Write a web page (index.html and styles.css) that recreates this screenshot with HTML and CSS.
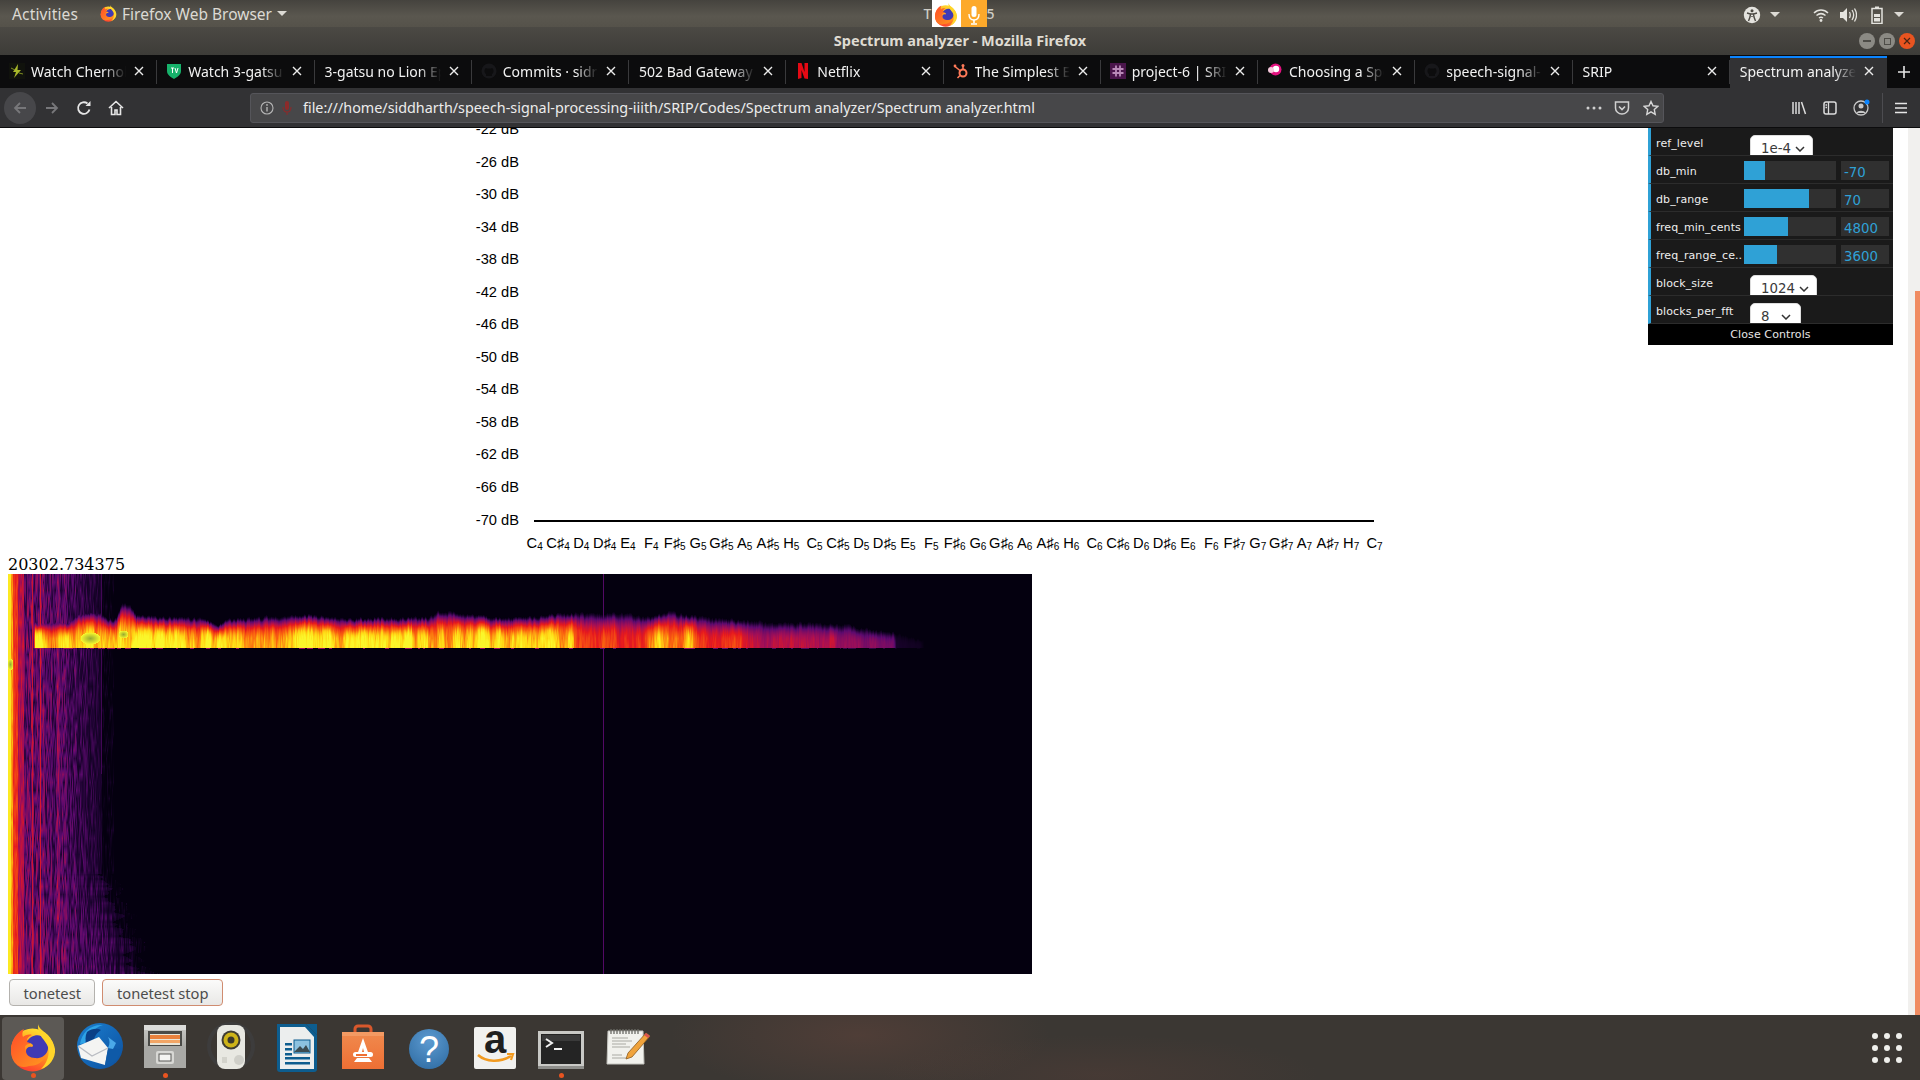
FILE: index.html
```html
<!DOCTYPE html>
<html lang="en">
<head>
<meta charset="utf-8">
<title>Spectrum analyzer - Mozilla Firefox</title>
<link rel="stylesheet" href="styles.css">
</head>
<body>
<svg class="defs" aria-hidden="true">
  <defs>
    <linearGradient id="ffBody" x1="0.75" y1="0.1" x2="0.35" y2="1">
      <stop offset="0" stop-color="#ffdc2e"/><stop offset="0.45" stop-color="#ff9a1f"/><stop offset="1" stop-color="#ff3a30"/>
    </linearGradient>
    <linearGradient id="ffHead" x1="0" y1="0" x2="1" y2="1">
      <stop offset="0" stop-color="#ff4a2a"/><stop offset="1" stop-color="#ff9b1e"/>
    </linearGradient>
    <linearGradient id="tbBlue" x1="0" y1="0" x2="1" y2="1">
      <stop offset="0" stop-color="#1b7fd0"/><stop offset="1" stop-color="#0c4f9e"/>
    </linearGradient>
    <linearGradient id="fileG" x1="0" y1="0" x2="0" y2="1">
      <stop offset="0" stop-color="#c9c9c6"/><stop offset="1" stop-color="#8d8d89"/>
    </linearGradient>
    <linearGradient id="bagG" x1="0" y1="0" x2="0" y2="1">
      <stop offset="0" stop-color="#f08a4e"/><stop offset="1" stop-color="#ee6f34"/>
    </linearGradient>
    <radialGradient id="helpG" cx="0.5" cy="0.3" r="0.8">
      <stop offset="0" stop-color="#5c9ad0"/><stop offset="1" stop-color="#2f6ca3"/>
    </radialGradient>
    <symbol id="firefox" viewBox="0 0 48 48" overflow="visible">
      <circle cx="23.5" cy="26" r="21.5" fill="url(#ffBody)"/>
      <path d="M2 27C2 16 8 8 15 5c-2 3-2 6-1 8 2-2 6-3 9-2-3 1-5 3-5 5 3 1 4 2 3 4-3 0-5 1-5 4 0 4 5 7 10 6 5 0 10-3 12-9 2 10-5 21-18 21C10 46 2 38 2 27Z" fill="url(#ffHead)"/>
      <path d="M18 18c2-5 9-8 14-6 5 2 8 7 7 13-1 6-7 10-13 9-5 0-9-3-9-7 0-3 3-5 6-4 2-1 1-3-2-4-1 0-2-1-3-1Z" fill="#3f3ab4"/>
      <path d="M29 0c1 7 15 11 17 25 1 9-6 18-14 20 6-6 9-14 7-22-2-7-11-11-10-23Z" fill="#ffd52a"/>
    </symbol>
  </defs>
</svg>

<header class="top-panel">
  <div class="panel-left">
    <span class="panel-item activities">Activities</span>
    <svg class="ff-small"><use href="#firefox"/></svg>
    <span class="panel-item">Firefox Web Browser</span>
    <span class="caret"></span>
  </div>
  <div class="panel-clock">
    <span class="clock-text">T</span>
    <span class="share-fox"><svg class="ff-share"><use href="#firefox"/></svg></span>
    <span class="share-mic">
      <svg viewBox="0 0 16 22" width="16" height="22"><rect x="5.5" y="2" width="5" height="11" rx="2.5" fill="#fff"/><path d="M3 10c0 4 2 6 5 6s5-2 5-6" fill="none" stroke="#fff" stroke-width="1.4"/><path d="M8 16v3M5 20h6" stroke="#fff" stroke-width="1.6"/></svg>
    </span>
    <span class="clock-text">5</span>
  </div>
  <div class="panel-right">
    <svg viewBox="0 0 18 18" width="18" height="18"><circle cx="9" cy="9" r="8.2" fill="#e4e3de"/><circle cx="9" cy="4.8" r="1.5" fill="#4c4a44"/><path d="M4 7l3.5 1-.5 3-1.5 4M14 7l-3.5 1 .5 3 1.5 4M7.5 8h3M9 10v1" fill="none" stroke="#4c4a44" stroke-width="1.4"/></svg>
    <span class="caret tight-1"></span>
    <svg class="wifi" viewBox="0 0 16 16" width="16" height="16"><path d="M1 6c4-4 10-4 14 0M3.5 8.5c3-2.5 6-2.5 9 0M6 11c1.500-1 2.500-1 4 0" fill="none" stroke="#e4e3de" stroke-width="1.5"/><circle cx="8" cy="13.500" r="1.400" fill="#e4e3de"/></svg>
    <svg class="vol" viewBox="0 0 18 16" width="18" height="16"><path d="M1 5h3l4-4v14l-4-4H1Z" fill="#e4e3de"/><path d="M10.500 5c1 2 1 4 0 6M13 3c2 3 2 7 0 10M15.500 1.500c2.500 4 2.500 9 0 13" fill="none" stroke="#e4e3de" stroke-width="1.300"/></svg>
    <svg class="batt" viewBox="0 0 12 18" width="12" height="18"><rect x="1" y="2.500" width="10" height="15" fill="none" stroke="#e4e3de" stroke-width="1.500"/><rect x="4" y="0.500" width="4" height="2" fill="#e4e3de"/><rect x="3" y="8" width="6" height="3" fill="#e4e3de"/><rect x="3" y="12" width="6" height="3.500" fill="#e4e3de"/></svg>
    <span class="caret tight-2"></span>
  </div>
</header>

<div class="title-bar">
  <span class="title-text">Spectrum analyzer - Mozilla Firefox</span>
  <div class="win-buttons">
    <span class="win-btn"><i class="win-min"></i></span>
    <span class="win-btn"><i class="win-max"></i></span>
    <span class="win-btn win-close"><svg viewBox="0 0 8 8" width="8" height="8"><path d="M1 1l6 6M7 1L1 7" stroke="#4a2413" stroke-width="1.200"/></svg></span>
  </div>
</div>

<nav class="tab-strip">
  <div class="tab">
    <svg class="fav" viewBox="0 0 16 16"><rect width="16" height="16" fill="#10120c"/><path d="M9 1L4 9h3l-2 6 7-8H8.500Z" fill="#a8b82a"/><path d="M2 5l4 2M14 11l-4-1" stroke="#7f8e20"/></svg>
    <span class="tab-title">Watch Chernobyl</span><svg class="tab-x" viewBox="0 0 10 10"><path d="M1 1l8 8M9 1L1 9"/></svg>
  </div>
  <div class="tab">
    <svg class="fav" viewBox="0 0 16 16"><path d="M1 1h14v7c0 4-4 6-7 8-3-2-7-4-7-8Z" fill="#17b26b"/><path d="M5 5h3M6.500 5v5M9 5l1.500 5L12 5" fill="none" stroke="#fff" stroke-width="1"/></svg>
    <span class="tab-title">Watch 3-gatsu no Lion</span><svg class="tab-x" viewBox="0 0 10 10"><path d="M1 1l8 8M9 1L1 9"/></svg>
  </div>
  <div class="tab tab-noicon">
    <span class="tab-title">3-gatsu no Lion Episode</span><svg class="tab-x" viewBox="0 0 10 10"><path d="M1 1l8 8M9 1L1 9"/></svg>
  </div>
  <div class="tab">
    <svg class="fav" viewBox="0 0 16 16"><circle cx="8" cy="8" r="7.500" fill="#17171a"/><path d="M5 13V11C3 10 3 6 5 5l1 .5h4L11 5c2 1 2 5 0 6v2Z" fill="#0c0c0d"/></svg>
    <span class="tab-title">Commits · sidrah</span><svg class="tab-x" viewBox="0 0 10 10"><path d="M1 1l8 8M9 1L1 9"/></svg>
  </div>
  <div class="tab tab-noicon">
    <span class="tab-title">502 Bad Gateway</span><svg class="tab-x" viewBox="0 0 10 10"><path d="M1 1l8 8M9 1L1 9"/></svg>
  </div>
  <div class="tab">
    <svg class="fav" viewBox="0 0 16 16"><path d="M3 0h3.500l3 9V0H13v16l-3.500-.5-3-8.500v8L3 16Z" fill="#e50914"/></svg>
    <span class="tab-title">Netflix</span><svg class="tab-x" viewBox="0 0 10 10"><path d="M1 1l8 8M9 1L1 9"/></svg>
  </div>
  <div class="tab">
    <svg class="fav" viewBox="0 0 16 16"><circle cx="10" cy="10" r="3.500" fill="none" stroke="#ff7a59" stroke-width="2"/><path d="M10 6V3M7.500 8L2 3.500" stroke="#ff7a59" stroke-width="1.600"/><circle cx="10" cy="2.500" r="1.500" fill="#ff7a59"/><circle cx="2" cy="3" r="1.400" fill="#ff7a59"/><path d="M7 12.500L4.500 15" stroke="#ff7a59" stroke-width="1.600"/></svg>
    <span class="tab-title">The Simplest Explanation</span><svg class="tab-x" viewBox="0 0 10 10"><path d="M1 1l8 8M9 1L1 9"/></svg>
  </div>
  <div class="tab">
    <svg class="fav" viewBox="0 0 16 16"><rect width="16" height="16" fill="#4a154b"/><path d="M6 2.500v11M10 2.500v11M2.500 6h11M2.500 10h11" stroke="#b98ab8" stroke-width="1.800"/></svg>
    <span class="tab-title">project-6 | SRIP Slack</span><svg class="tab-x" viewBox="0 0 10 10"><path d="M1 1l8 8M9 1L1 9"/></svg>
  </div>
  <div class="tab">
    <svg class="fav" viewBox="0 0 16 16"><circle cx="8.500" cy="6.500" r="6" fill="#e2117e"/><circle cx="9" cy="6" r="3.200" fill="#fff"/><circle cx="4" cy="7" r="3" fill="#f6c9dc"/></svg>
    <span class="tab-title">Choosing a Spectrum</span><svg class="tab-x" viewBox="0 0 10 10"><path d="M1 1l8 8M9 1L1 9"/></svg>
  </div>
  <div class="tab">
    <svg class="fav" viewBox="0 0 16 16"><circle cx="8" cy="8" r="7.500" fill="#17171a"/><path d="M5 13V11C3 10 3 6 5 5l1 .5h4L11 5c2 1 2 5 0 6v2Z" fill="#0c0c0d"/></svg>
    <span class="tab-title">speech-signal-processing</span><svg class="tab-x" viewBox="0 0 10 10"><path d="M1 1l8 8M9 1L1 9"/></svg>
  </div>
  <div class="tab tab-noicon">
    <span class="tab-title">SRIP</span><svg class="tab-x" viewBox="0 0 10 10"><path d="M1 1l8 8M9 1L1 9"/></svg>
  </div>
  <div class="tab tab-noicon tab-active">
    <span class="tab-title">Spectrum analyzer</span><svg class="tab-x" viewBox="0 0 10 10"><path d="M1 1l8 8M9 1L1 9"/></svg>
  </div>
  <div class="new-tab"><svg viewBox="0 0 14 14" width="14" height="14"><path d="M7 1v12M1 7h12" stroke="#e6e6e6" stroke-width="1.600"/></svg></div>
</nav>

<div class="nav-bar">
  <span class="back-btn"><svg viewBox="0 0 16 16" width="16" height="16"><path d="M14 8H3M8 3L3 8l5 5" fill="none" stroke="#77777a" stroke-width="1.800"/></svg></span>
  <span class="nav-btn"><svg viewBox="0 0 16 16" width="16" height="16"><path d="M2 8h11M8 3l5 5-5 5" fill="none" stroke="#77777a" stroke-width="1.800"/></svg></span>
  <span class="nav-btn"><svg viewBox="0 0 16 16" width="16" height="16"><path d="M13.500 9.500A5.800 5.800 0 1 1 11.500 3.500" fill="none" stroke="#e6e6e6" stroke-width="1.800"/><path d="M9.500 6h5V1Z" fill="#e6e6e6"/></svg></span>
  <span class="nav-btn"><svg viewBox="0 0 16 16" width="16" height="16"><path d="M1 8l7-6.500L15 8M3.500 7v7.500h3.500V10h2v4.500h3.500V7" fill="none" stroke="#e6e6e6" stroke-width="1.600"/></svg></span>
  <div class="url-bar">
    <svg class="url-info" viewBox="0 0 14 14" width="14" height="14"><circle cx="7" cy="7" r="6" fill="none" stroke="#b5b5b5" stroke-width="1.100"/><path d="M7 6v4.500" stroke="#b5b5b5" stroke-width="1.400"/><circle cx="7" cy="3.900" r=".9" fill="#b5b5b5"/></svg>
    <svg class="url-mic" viewBox="0 0 12 16" width="12" height="16"><rect x="4" y="1" width="4" height="9" rx="2" fill="#8c2a2a"/><path d="M2 7c0 3 1.500 5 4 5s4-2 4-5M6 12v3" fill="none" stroke="#8c2a2a" stroke-width="1.100"/></svg>
    <span class="url-text">file:///home/siddharth/speech-signal-processing-iiith/SRIP/Codes/Spectrum analyzer/Spectrum analyzer.html</span>
    <svg class="url-dots" viewBox="0 0 16 4" width="16" height="4"><circle cx="2" cy="2" r="1.500" fill="#d0d0d0"/><circle cx="8" cy="2" r="1.500" fill="#d0d0d0"/><circle cx="14" cy="2" r="1.500" fill="#d0d0d0"/></svg>
    <svg class="url-pocket" viewBox="0 0 16 16" width="16" height="16"><path d="M1.500 2h13v6c0 3.500-3 6-6.500 6s-6.500-2.500-6.500-6Z" fill="none" stroke="#d0d0d0" stroke-width="1.500"/><path d="M5 6.500l3 3 3-3" fill="none" stroke="#d0d0d0" stroke-width="1.600"/></svg>
    <svg class="url-star" viewBox="0 0 16 16" width="16" height="16"><path d="M8 1.500l2 4.300 4.700.6-3.400 3.200.9 4.700L8 11.900l-4.200 2.400.9-4.700L1.300 6.400 6 5.800Z" fill="none" stroke="#d8d8d8" stroke-width="1.400"/></svg>
  </div>
  <div class="nav-tools">
    <svg viewBox="0 0 16 16" width="16" height="16"><path d="M2 2v12M5 2v12M8 2v12M10.500 2l4 12" fill="none" stroke="#dcdcdc" stroke-width="1.500"/></svg>
    <svg viewBox="0 0 16 16" width="16" height="16"><rect x="2" y="2" width="12" height="12" rx="2" fill="none" stroke="#dcdcdc" stroke-width="1.500"/><path d="M6.500 2v12M3.500 5h1.500M3.500 7.500h1.500" stroke="#dcdcdc" stroke-width="1.300"/></svg>
    <svg viewBox="0 0 18 18" width="18" height="18"><circle cx="8" cy="9" r="7" fill="none" stroke="#c8c8c8" stroke-width="1.300"/><circle cx="8" cy="7" r="2.500" fill="#c8c8c8"/><path d="M3.500 14c1-3 8-3 9 0" fill="#c8c8c8"/><circle cx="14" cy="3" r="2.500" fill="#0a84ff"/></svg>
    <span class="tool-sep"></span>
    <svg viewBox="0 0 14 14" width="14" height="14"><path d="M1 2.500h12M1 7h12M1 11.500h12" stroke="#e6e6e6" stroke-width="1.600"/></svg>
  </div>
</div>

<div class="viewport">
  <main class="page">
    <div class="chart">
      <div class="y-axis">
        <span>-22 dB</span><span>-26 dB</span><span>-30 dB</span><span>-34 dB</span><span>-38 dB</span><span>-42 dB</span><span>-46 dB</span><span>-50 dB</span><span>-54 dB</span><span>-58 dB</span><span>-62 dB</span><span>-66 dB</span><span>-70 dB</span>
      </div>
      <div class="plot"></div>
    </div>
    <div class="notes">
      <span>C<sub>4</sub></span><span>C♯<sub>4</sub></span><span>D<sub>4</sub></span><span>D♯<sub>4</sub></span><span>E<sub>4</sub></span><span>F<sub>4</sub></span><span>F♯<sub>5</sub></span><span>G<sub>5</sub></span><span>G♯<sub>5</sub></span><span>A<sub>5</sub></span><span>A♯<sub>5</sub></span><span>H<sub>5</sub></span>
      <span>C<sub>5</sub></span><span>C♯<sub>5</sub></span><span>D<sub>5</sub></span><span>D♯<sub>5</sub></span><span>E<sub>5</sub></span><span>F<sub>5</sub></span><span>F♯<sub>6</sub></span><span>G<sub>6</sub></span><span>G♯<sub>6</sub></span><span>A<sub>6</sub></span><span>A♯<sub>6</sub></span><span>H<sub>6</sub></span>
      <span>C<sub>6</sub></span><span>C♯<sub>6</sub></span><span>D<sub>6</sub></span><span>D♯<sub>6</sub></span><span>E<sub>6</sub></span><span>F<sub>6</sub></span><span>F♯<sub>7</sub></span><span>G<sub>7</sub></span><span>G♯<sub>7</sub></span><span>A<sub>7</sub></span><span>A♯<sub>7</sub></span><span>H<sub>7</sub></span><span>C<sub>7</sub></span>
    </div>
    <div class="freq">20302.734375</div>
    <canvas id="spectrogram" class="spectrogram" width="1024" height="400"></canvas>
    <div class="buttons">
      <button class="btn">tonetest</button>
      <button class="btn btn-focus">tonetest stop</button>
    </div>

    <aside class="gui">
      <div class="gui-row"><span class="gui-label">ref_level</span><span class="gui-select sel-ref">1e-4<svg viewBox="0 0 10 6" width="10" height="6"><path d="M1 1l4 4 4-4" fill="none" stroke="#333" stroke-width="1.500"/></svg></span></div>
      <div class="gui-row"><span class="gui-label">db_min</span><span class="slider"><i class="fill fill-21"></i></span><span class="num">-70</span></div>
      <div class="gui-row"><span class="gui-label">db_range</span><span class="slider"><i class="fill fill-65"></i></span><span class="num">70</span></div>
      <div class="gui-row"><span class="gui-label">freq_min_cents</span><span class="slider"><i class="fill fill-44"></i></span><span class="num">4800</span></div>
      <div class="gui-row"><span class="gui-label">freq_range_ce..</span><span class="slider"><i class="fill fill-33"></i></span><span class="num">3600</span></div>
      <div class="gui-row"><span class="gui-label">block_size</span><span class="gui-select sel-block">1024<svg viewBox="0 0 10 6" width="10" height="6"><path d="M1 1l4 4 4-4" fill="none" stroke="#333" stroke-width="1.500"/></svg></span></div>
      <div class="gui-row"><span class="gui-label">blocks_per_fft</span><span class="gui-select sel-fft">8<svg viewBox="0 0 10 6" width="10" height="6"><path d="M1 1l4 4 4-4" fill="none" stroke="#333" stroke-width="1.500"/></svg></span></div>
      <div class="gui-close">Close Controls</div>
    </aside>
  </main>
  <div class="scrollbar"><span class="thumb"></span></div>
</div>

<footer class="dock">
  <div class="dock-item dock-active">
    <svg class="dock-icon"><use href="#firefox"/></svg><i class="dot"></i>
  </div>
  <div class="dock-item">
    <svg class="dock-icon" viewBox="0 0 48 48">
      <circle cx="25" cy="22" r="23" fill="url(#tbBlue)"/>
      <path d="M5 20C7 8 16 0 28 1c-7 2-9 5-10 9-4 1-7 4-8 9Z" fill="#2fa3e6"/>
      <path d="M12 8c5-4 11-4 14-2-3 2-6 5-7 9-3 1-6 3-7 6-2-4-2-9 0-13Z" fill="#0b3f86"/>
      <path d="M3 22L24 13l9 11-3 17-24-7Z" fill="#f4f4f2"/>
      <path d="M3 22l14 10 16-8" fill="none" stroke="#b9bcc2" stroke-width="1.300"/>
      <path d="M30 41c7 0 15-6 17-17-3 2-5 1-7 0l-7 1Z" fill="#0f5aa8"/>
      <path d="M33 24c2-4 2-8 0-11l8 6-3 6Z" fill="#4aa9e8"/>
    </svg>
  </div>
  <div class="dock-item">
    <svg class="dock-icon" viewBox="0 0 48 48">
      <rect x="3" y="1" width="42" height="43" rx="2" fill="url(#fileG)"/>
      <rect x="3" y="1" width="42" height="5" fill="#dcdcda"/>
      <rect x="7" y="7" width="34" height="15" fill="#4a4a47"/>
      <rect x="9" y="10" width="30" height="11" fill="#e9e4d6"/>
      <rect x="9" y="11" width="30" height="4" fill="#e9813c"/>
      <rect x="9" y="16" width="30" height="3" fill="#f2a565"/>
      <path d="M3 22h42v22H3Z" fill="#a9a9a6"/>
      <rect x="15" y="27" width="18" height="13" rx="2" fill="#d8d8d5"/>
      <rect x="18" y="30" width="12" height="7" fill="#f4f4f2" stroke="#5a5a58"/>
    </svg><i class="dot"></i>
  </div>
  <div class="dock-item">
    <svg class="dock-icon" viewBox="0 0 48 48">
      <circle cx="24" cy="22" r="24" fill="#434a52" opacity=".3"/>
      <circle cx="24" cy="22" r="20" fill="#3b3733"/>
      <rect x="10" y="1" width="28" height="44" rx="8" fill="#e8e8e2"/>
      <circle cx="24" cy="16" r="9.500" fill="#3f3c34"/>
      <circle cx="24" cy="16" r="7.500" fill="#cdb319"/>
      <circle cx="24" cy="16" r="3.500" fill="#3a372c"/>
      <circle cx="32" cy="36" r="5" fill="#cfcfc9"/>
      <rect x="15" y="33" width="5" height="6" fill="#d3d3cc"/>
    </svg>
  </div>
  <div class="dock-item">
    <svg class="dock-icon" viewBox="0 0 48 48">
      <path d="M4 0h29l11 11v34a3 3 0 0 1-3 3H7a3 3 0 0 1-3-3Z" fill="#0d5d8f"/>
      <path d="M7 3h25l9 10v32H7Z" fill="#eceeee"/>
      <path d="M33 0h11v11Z" fill="#0d5d8f"/>
      <rect x="12" y="19" width="7" height="2.500" fill="#0d5d8f"/><rect x="12" y="24" width="7" height="2.500" fill="#0d5d8f"/><rect x="12" y="29" width="7" height="2.500" fill="#0d5d8f"/>
      <rect x="21" y="16" width="16" height="13" fill="#8cc2e0" stroke="#0d5d8f"/>
      <path d="M21 28l6-6 3 3 3-4 4 7Z" fill="#3c4c52"/>
      <rect x="12" y="33" width="25" height="2.500" fill="#0d5d8f"/><rect x="12" y="38" width="25" height="2.500" fill="#0d5d8f"/>
    </svg>
  </div>
  <div class="dock-item">
    <svg class="dock-icon" viewBox="0 0 48 48">
      <path d="M16 8V5a3 3 0 0 1 3-3h10a3 3 0 0 1 3 3v3" fill="none" stroke="#d9582c" stroke-width="3"/>
      <path d="M3 8h42l0 37H3Z" fill="url(#bagG)"/>
      <path d="M3 8h42v4H3Z" fill="#f39a63"/>
      <path d="M18 31l6-17 6 17h-4l-2-7-2 7Z" fill="#fff"/>
      <rect x="14" y="28" width="20" height="5" rx="2.500" fill="#fff"/>
      <rect x="17" y="30" width="11" height="2" fill="#ee6f34"/>
      <path d="M15 38l3-4h12l3 4Z" fill="#fff"/>
    </svg>
  </div>
  <div class="dock-item">
    <svg class="dock-icon" viewBox="0 0 48 48">
      <circle cx="24" cy="25" r="20" fill="url(#helpG)"/>
      <text x="24" y="38" class="help-q">?</text>
    </svg>
  </div>
  <div class="dock-item">
    <svg class="dock-icon" viewBox="0 0 48 48">
      <rect x="3" y="3" width="42" height="42" rx="2" fill="#f1f1ef"/>
      <text x="24" y="29" class="amazon-a">a</text>
      <path d="M7 31c8 7 22 8 33 1" fill="none" stroke="#f29a1f" stroke-width="2.600"/>
      <path d="M36 30l6 0-2 6" fill="none" stroke="#f29a1f" stroke-width="2.200"/>
    </svg>
  </div>
  <div class="dock-item">
    <svg class="dock-icon" viewBox="0 0 48 48">
      <rect x="1" y="7" width="46" height="38" fill="#c9c9c6"/>
      <rect x="1" y="42" width="46" height="3" fill="#8e8e8b"/>
      <rect x="4" y="10" width="40" height="30" fill="#242424"/>
      <rect x="5" y="11" width="38" height="6" fill="#3a3a3a"/>
      <path d="M9 15l6 4-6 4" fill="none" stroke="#f2f2f2" stroke-width="2"/>
      <rect x="17" y="24" width="8" height="2" fill="#f2f2f2"/>
    </svg><i class="dot"></i>
  </div>
  <div class="dock-item">
    <svg class="dock-icon" viewBox="0 0 48 48">
      <path d="M5 7h35l1 33H4Z" fill="#f1f1ed" stroke="#c4c4bf"/>
      <path d="M8 5v5M11 5v5M14 5v5M17 5v5M20 5v5M23 5v5M26 5v5M29 5v5M32 5v5M35 5v5" stroke="#6a6a66" stroke-width="1.300"/>
      <path d="M9 14h16M9 17h20M9 20h14M9 23h18M9 31h10M9 34h14" stroke="#a9a9a4" stroke-width="1.200"/>
      <path d="M43 9l4 3-18 21-6 2 2-6Z" fill="#f0a33c" stroke="#8a5a20" stroke-width=".8"/>
      <path d="M43 9l4 3-2 2-4-3Z" fill="#d9534f"/>
    </svg>
  </div>
  <svg class="app-grid" viewBox="0 0 30 30" width="30" height="30">
    <circle cx="3" cy="3" r="3"/><circle cx="15" cy="3" r="3"/><circle cx="27" cy="3" r="3"/>
    <circle cx="3" cy="15" r="3"/><circle cx="15" cy="15" r="3"/><circle cx="27" cy="15" r="3"/>
    <circle cx="3" cy="27" r="3"/><circle cx="15" cy="27" r="3"/><circle cx="27" cy="27" r="3"/>
  </svg>
</footer>
<script src="script.js"></script>
</body>
</html>
```
FILE: styles.css
```css
* { box-sizing: border-box; }
html, body { margin: 0; height: 100%; overflow: hidden; }
body {
  width: 1920px;
  height: 1080px;
  display: flex;
  flex-direction: column;
  font-family: "Noto Sans", sans-serif;
  background: #fff;
}
.defs { display: block; width: 0; height: 0; overflow: hidden; flex: none; }

/* GNOME top panel */
.top-panel {
  height: 27px;
  flex: none;
  display: grid;
  grid-template-columns: 1fr auto 1fr;
  background: linear-gradient(#45433e, #5a574f 60%, #55524a);
  color: #dcdad4;
  font-size: 15.5px;
}
.panel-left { display: flex; align-items: center; padding: 0 0 2px 12px; }
.panel-item { white-space: nowrap; }
.activities { margin-right: 22px; letter-spacing: .15px; }
.ff-small { width: 17px; height: 17px; margin-right: 5px; flex: none; }
.caret {
  width: 0; height: 0; margin-left: 5px;
  border-left: 5px solid transparent;
  border-right: 5px solid transparent;
  border-top: 5px solid #dcdad4;
}
.panel-clock { display: flex; align-items: flex-start; }
.clock-text { line-height: 27px; width: 10px; font-weight: 500; font-size: 14px; color: #cfcdc6; }
.share-fox { width: 29px; height: 29px; background: #fff; display: flex; align-items: center; justify-content: center; margin-left: -2px; }
.ff-share { width: 24px; height: 24px; }
.share-mic { width: 26px; height: 29px; background: #fda92b; display: flex; align-items: center; justify-content: center; }
.panel-right { display: flex; align-items: center; justify-content: flex-end; padding-right: 16px; }
.tight-1 { margin-left: 9px; margin-right: 33px; }
.wifi { margin-right: 10px; }
.vol { margin-right: 14px; }
.tight-2 { margin-left: 11px; }

/* window title bar */
.title-bar {
  height: 28px;
  flex: none;
  display: flex;
  align-items: center;
  justify-content: center;
  position: relative;
  background: linear-gradient(#4b4944, #3d3c38);
  padding-bottom: 2px;
}
.title-text { color: #dfdbd2; font-size: 14.5px; font-weight: 700; }
.win-buttons { position: absolute; right: 5px; top: 6px; display: flex; gap: 4px; }
.win-btn {
  width: 16px; height: 16px; border-radius: 50%;
  background: #8b8a84;
  display: flex; align-items: center; justify-content: center;
}
.win-min { width: 8px; height: 2px; background: #4d4c47; display: block; }
.win-max { width: 7px; height: 7px; border: 1px solid #4d4c47; display: block; }
.win-close { background: #e95420; }

/* tabs */
.tab-strip { height: 33px; flex: none; display: flex; background: #0c0c0d; color: #f2f2f2; font-size: 14px; }
.tab {
  width: 157.25px;
  flex: none;
  display: flex;
  align-items: center;
  padding: 0 13px 1px 9px;
  position: relative;
}
.tab::after {
  content: "";
  position: absolute;
  right: 0; top: 5px; bottom: 4px;
  width: 1px;
  background: #3a3a3c;
}
.tab-noicon { padding-left: 10px; }
.tab-active { background: #323234; border-top: 2px solid #0a84ff; margin-top: 1px; padding-bottom: 4px; }
.tab-active::after { display: none; }
.fav { width: 16px; height: 16px; margin-right: 6px; flex: none; }
.tab-title {
  flex: 1;
  min-width: 0;
  white-space: nowrap;
  overflow: hidden;
  -webkit-mask-image: linear-gradient(to right, #000 calc(100% - 22px), transparent);
  mask-image: linear-gradient(to right, #000 calc(100% - 22px), transparent);
}
.tab-x { width: 10px; height: 10px; flex: none; margin-left: 8px; fill: none; stroke: #ececec; stroke-width: 1.400; }
.new-tab { flex: 1; display: flex; align-items: center; justify-content: center; }

/* navigation bar */
.nav-bar {
  height: 40px;
  flex: none;
  display: flex;
  align-items: center;
  padding-left: 4px;
  background: #323234;
  border-bottom: 1px solid #0c0c0d;
}
.back-btn {
  width: 32px; height: 32px; border-radius: 50%;
  background: #47474a;
  display: flex; align-items: center; justify-content: center;
}
.nav-btn { width: 32px; height: 32px; display: flex; align-items: center; justify-content: center; }
.url-bar {
  width: 1414px;
  height: 30px;
  margin-left: 118px;
  display: flex;
  align-items: center;
  background: #474749;
  border: 1px solid #55555a;
  border-radius: 3px;
  color: #ececec;
  font-size: 14.35px;
  padding-left: 9px;
}
.url-mic { margin-left: 7px; }
.url-text { margin-left: 10px; flex: 1; white-space: nowrap; }
.url-dots { margin-right: 12px; }
.url-pocket { margin-right: 13px; }
.url-star { margin-right: 4px; }
.nav-tools { flex: 1; display: flex; align-items: center; padding-left: 127px; gap: 15px; }
.tool-sep { width: 1px; height: 30px; background: #4c4c50; margin-left: -4px; margin-right: -4px; }

/* page */
.viewport { height: 887px; flex: none; display: flex; overflow: hidden; position: relative; }
.page { flex: 1; position: relative; overflow: hidden; background: #fff; }
.chart { display: flex; align-items: flex-start; height: 394px; }
.y-axis {
  width: 519px;
  margin-top: -15px;
  display: flex;
  flex-direction: column;
  align-items: flex-end;
  flex: none;
  font-family: "Liberation Sans", Arial, sans-serif;
  font-size: 14.67px;
  color: #000;
}
.y-axis span { height: 32.55px; line-height: 32.55px; white-space: nowrap; }
.plot { width: 840px; height: 394px; margin-left: 15px; border-bottom: 2px solid #000; flex: none; }
.notes {
  display: grid;
  grid-template-columns: repeat(37, 23.33px);
  margin-left: 523px;
  height: 31px;
  padding-top: 11px;
  font-family: "Liberation Sans", Arial, sans-serif;
  font-size: 14.67px;
  line-height: 20px;
  color: #000;
}
.notes span { display: flex; justify-content: center; white-space: nowrap; align-items: baseline; }
.notes sub { font-size: 10px; vertical-align: baseline; line-height: 1; position: relative; top: 2px; }
.freq {
  margin-left: 8px;
  height: 21px;
  font-family: "DejaVu Serif", "Liberation Serif", serif;
  font-size: 16px;
  line-height: 23px;
  color: #000;
}
.spectrogram { display: block; width: 1024px; height: 400px; margin-left: 8px; background: #05000f; }
.buttons { display: flex; gap: 7px; margin: 5px 0 0 9px; }
.btn {
  height: 27px;
  padding: 0 13.5px;
  background: linear-gradient(#fbfbfa, #e9e8e6);
  border: 1px solid #b4b2ae;
  border-radius: 4px;
  color: #4c4c4c;
  font-family: "Noto Sans", sans-serif;
  font-size: 14.7px;
}
.btn-focus { border-color: #d08c70; }

/* dat.GUI panel overlays the page */
.gui {
  position: absolute;
  top: 0; left: 1648px;
  width: 245px;
  background: #1a1a1a;
  font-family: "DejaVu Sans", sans-serif;
  font-size: 11px;
  letter-spacing: .1px;
  color: #eee;
}
.gui-row {
  height: 28px;
  display: flex;
  align-items: flex-start;
  border-left: 3px solid #2fa1d6;
  border-bottom: 1px solid #2c2c2c;
  overflow: hidden;
  position: relative;
}
.gui-label { width: 93px; flex: none; padding-left: 5px; line-height: 31px; white-space: nowrap; overflow: hidden; }
.slider { width: 92px; height: 19px; margin-top: 5px; background: #303030; flex: none; display: block; }
.fill { display: block; height: 100%; background: #2fa1d6; }
.fill-21 { width: 21px; }
.fill-65 { width: 65px; }
.fill-44 { width: 44px; }
.fill-33 { width: 33px; }
.num {
  width: 48px; height: 19px; margin: 5px 0 0 5px;
  background: #303030;
  color: #2fa1d6;
  font-size: 13.33px;
  line-height: 24px;
  padding-left: 3px;
  flex: none;
  overflow: hidden;
  letter-spacing: 0;
}
.gui-select {
  margin: 7px 0 0 6px;
  height: 30px;
  background: #fff;
  border: 1px solid #ddd;
  border-radius: 5px;
  color: #3a3a3a;
  font-size: 13.33px;
  line-height: 20px;
  padding: 3px 0 0 10px;
  display: flex;
  align-items: flex-start;
  flex: none;
  letter-spacing: 0;
}
.gui-select svg { margin: 7px 0 0 4px; flex: none; }
.sel-ref { width: 63px; }
.sel-block { width: 67px; }
.sel-fft { width: 51px; }
.sel-fft svg { margin-left: 12px; }
.gui-close { height: 21px; line-height: 21px; background: #000; text-align: center; color: #e6e6e6; }

/* scrollbar */
.scrollbar { width: 12px; flex: none; background: #f1f0ee; display: flex; justify-content: flex-end; padding-top: 163px; }
.thumb { width: 5px; height: 724px; background: #f08c62; display: block; }

/* dock */
.dock {
  height: 65px;
  flex: none;
  display: flex;
  position: relative;
  background:
    radial-gradient(ellipse 190px 60px at 860px 20px, rgba(150, 85, 70, .22), transparent),
    radial-gradient(ellipse 220px 40px at 1100px 60px, rgba(120, 70, 60, .18), transparent),
    #3b3733;
}
.dock-item {
  width: 66px;
  height: 65px;
  flex: none;
  display: flex;
  justify-content: center;
  padding-top: 9px;
  position: relative;
}
.dock-active::before {
  content: "";
  position: absolute;
  left: 2px; right: 2px; top: 2px; bottom: 0;
  background: #5c5955;
  border-radius: 4px;
}
.dock-icon { width: 48px; height: 48px; position: relative; overflow: visible; }
.dot {
  position: absolute;
  left: 31px; bottom: 2px;
  width: 5px; height: 5px;
  border-radius: 50%;
  background: #e95420;
}
.help-q { font-family: "Liberation Sans", sans-serif; font-size: 36px; fill: #fff; text-anchor: middle; }
.amazon-a { font-family: "Liberation Sans", sans-serif; font-size: 40px; font-weight: 700; fill: #1f1f1f; text-anchor: middle; }
.app-grid { margin: 18px 18px 0 auto; fill: #efefec; flex: none; }
```
FILE: script.js
```js
(function () {
  var canvas = document.getElementById('spectrogram');
  var ctx = canvas.getContext('2d');
  var W = canvas.width, H = canvas.height;
  var img = ctx.createImageData(W, H);
  var seed = 12345;
  function rnd() { seed = (seed * 1664525 + 1013904223) >>> 0; return seed / 4294967296; }

  var stops = [
    [0.00, 4, 0, 15], [0.12, 30, 3, 50], [0.26, 92, 10, 110], [0.42, 165, 15, 85],
    [0.55, 230, 25, 30], [0.70, 250, 100, 15], [0.85, 255, 215, 20], [0.95, 250, 250, 45], [1.0, 150, 170, 50]
  ];
  function colour(v) {
    v = Math.max(0, Math.min(1, v));
    for (var i = 1; i < stops.length; i++) {
      if (v <= stops[i][0]) {
        var a = stops[i - 1], b = stops[i], t = (v - a[0]) / (b[0] - a[0]);
        return [a[1] + (b[1] - a[1]) * t, a[2] + (b[2] - a[2]) * t, a[3] + (b[3] - a[3]) * t];
      }
    }
    return stops[stops.length - 1].slice(1);
  }
  function lerpTable(t, x) {
    for (var i = 1; i < t.length; i++) {
      if (x <= t[i][0]) {
        var k = (x - t[i - 1][0]) / (t[i][0] - t[i - 1][0]);
        return t[i - 1][1] + (t[i][1] - t[i - 1][1]) * k;
      }
    }
    return t[t.length - 1][1];
  }
  function smooth(arr, passes) {
    for (var p = 0; p < passes; p++) {
      for (var i = 1; i < arr.length - 1; i++) arr[i] = (arr[i - 1] + arr[i] * 2 + arr[i + 1]) / 4;
    }
    return arr;
  }

  var ampTable = [[0, 0], [24, 0], [27, .98], [560, .98], [570, .68], [628, .66], [650, .92], [680, .92], [695, .68], [725, .64],
    [760, .54], [825, .52], [835, .42], [885, .34], [888, .1], [912, .06], [916, 0], [1024, 0]];
  var topTable = [[0, 70], [26, 46], [60, 46], [70, 38], [92, 37], [100, 44], [108, 44], [114, 28], [122, 30], [128, 41], [190, 44],
    [210, 49], [225, 44], [300, 40], [340, 44], [420, 43], [430, 37], [500, 44], [560, 39], [620, 39], [640, 43], [660, 37], [690, 42], [760, 48],
    [825, 49], [885, 58], [912, 66], [1024, 72]];

  var colN = new Float32Array(W), colT = new Float32Array(W), colL = new Float32Array(W), colS = new Float32Array(W);
  for (var x = 0; x < W; x += 1) {
    colN[x] = rnd(); colT[x] = rnd(); colL[x] = rnd(); colS[x] = rnd();
  }
  smooth(colN, 3); smooth(colT, 1); smooth(colL, 1); smooth(colS, 10);
  // stretch the heavily smoothed slow-variation curve back to the 0..1 range
  for (x = 0; x < W; x++) { colS[x] = Math.max(0, Math.min(1, (colS[x] - 0.5) * 5 + 0.5)); colN[x] = Math.max(0, Math.min(1, (colN[x] - 0.5) * 2.5 + 0.5)); }

  // per-row jitter of the right boundary of the onset region
  var rowJ = new Float32Array(H);
  for (var r = 0; r < H; r++) rowJ[r] = rnd();
  smooth(rowJ, 3);

  // 2D noise with cells one pixel wide and many tall, interpolated along y: vertical streaks
  var gw = W, gh = 60, grain = new Float32Array(gw * gh);
  for (var i = 0; i < grain.length; i++) grain[i] = rnd();
  function streak(cx, y) {
    var f = y / 8, r = Math.floor(f), k = f - r;
    var r2 = Math.min(gh - 1, r + 1);
    return grain[cx + gw * r] * (1 - k) + grain[cx + gw * r2] * k;
  }

  var data = img.data;
  for (var y = 0; y < H; y++) {
    for (var cx = 0; cx < W; cx++) {
      var v = 0;
      var g = streak(cx, y);
      var extent = y < 300 ? 94 : 94 + (y - 300) * 0.34 + (rowJ[y] - 0.5) * 30;
      // onset columns at the left edge
      if (cx < 3) v = 0.9;
      else if (cx < 5) v = 0.72 + 0.1 * g;
      else if (cx < 10) v = 0.55 + 0.1 * g;
      else if (cx < 16) v = 0.36 + 0.16 * g;
      else if (cx < extent) {
        var fall = 1 - (cx - 16) / (extent - 16);
        v = (0.08 + 0.28 * Math.pow(fall, 0.6)) * (0.55 + 0.6 * colL[cx]) * (0.45 + 0.95 * g);
        if (Math.abs(cx - 24) < 1) v = 0.5;
        if (Math.abs(cx - 32) < 1) v = 0.52;
        if (cx > 48 && cx < 52) v += 0.08;
        if (Math.abs(cx - 93) < 1 && y < 200) v = Math.max(v, 0.2);
      } else if (cx < extent + 12) {
        v = 0.1 * g * g * g;
      }
      // harmonic band
      var amp = lerpTable(ampTable, cx);
      if (amp > 0) {
        var top = lerpTable(topTable, cx) - (colT[cx] - 0.5) * 5;
        var bottom = 73;
        if (y >= top && y <= bottom) {
          var t = (bottom - y) / (bottom - top);
          var shape = 1 - Math.pow(t, 3);
          var m = amp * (0.76 + 0.16 * colS[cx] + 0.12 * colN[cx]) * (0.92 + 0.12 * g);
          var b = Math.min(0.94, m * shape);
          v = Math.max(v, b);
        } else if (y === bottom + 1 && colN[cx] > 0.7) {
          v = Math.max(v, 0.4 * amp);
        }
      }
      // bright blobs
      var d1 = Math.hypot((cx - 82) / 10, (y - 64) / 6), d2 = Math.hypot((cx - 115) / 5, (y - 60) / 4), d3 = Math.hypot((cx - 2) / 3, (y - 90) / 6);
      var d = Math.min(d1, d2, d3);
      if (d < 1) v = Math.max(v, 1.0 - 0.05 * d);
      // transient column
      if (Math.abs(cx - 595) < 1) v = Math.max(v, 0.24);
      var c = colour(v);
      var o = (y * W + cx) * 4;
      data[o] = c[0]; data[o + 1] = c[1]; data[o + 2] = c[2]; data[o + 3] = 255;
    }
  }
  ctx.putImageData(img, 0, 0);
  // soften slightly, the way the original's scaled-up texture looks
  ctx.filter = 'blur(0.6px)';
  ctx.drawImage(canvas, 0, 0);
  ctx.filter = 'none';
})();
```
